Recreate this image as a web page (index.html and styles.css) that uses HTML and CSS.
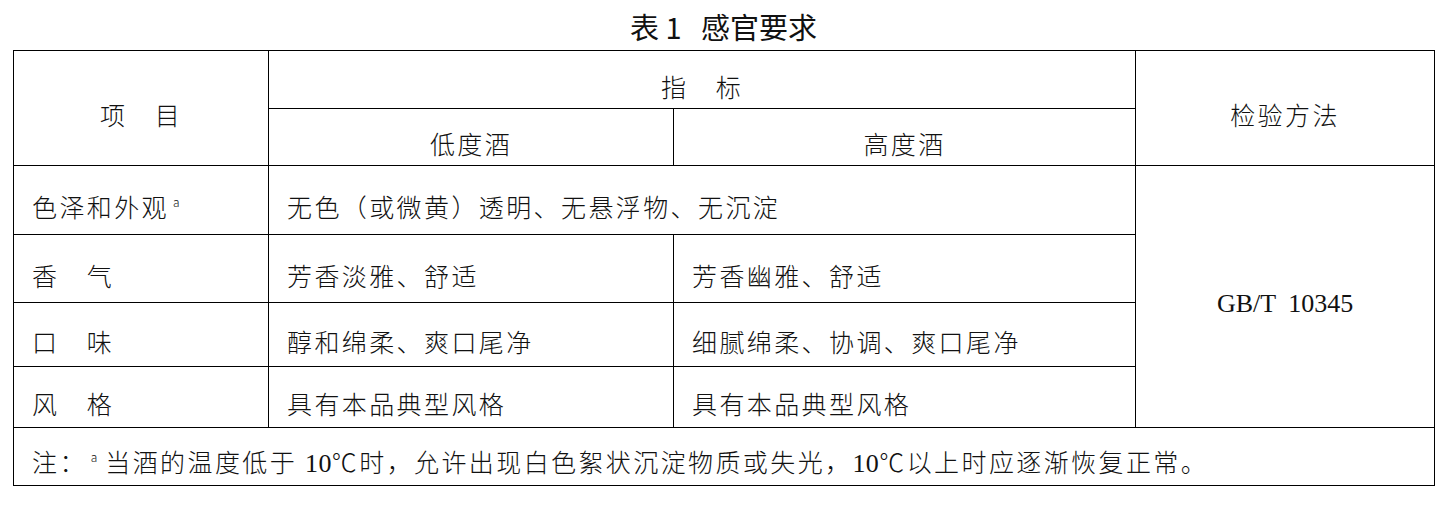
FILE: index.html
```html
<!DOCTYPE html>
<html lang="zh-CN">
<head>
<meta charset="utf-8">
<title>表1 感官要求</title>
<link rel="stylesheet" href="styles.css">
</head>
<body>
<div class="page">
  <h1 class="title">表&nbsp;1&nbsp;&nbsp;&nbsp;感官要求</h1>
  <table class="spec">
    <colgroup>
      <col class="c1"><col class="c2"><col class="c3"><col class="c4">
    </colgroup>
    <tr class="h1">
      <td rowspan="2" class="center">项　目</td>
      <td colspan="2" class="center">指　标</td>
      <td rowspan="2" class="center">检验方法</td>
    </tr>
    <tr class="h2">
      <td class="center">低度酒</td>
      <td class="center">高度酒</td>
    </tr>
    <tr class="r1">
      <td>色泽和外观<sup class="sup">a</sup></td>
      <td colspan="2">无色（或微黄）透明、无悬浮物、无沉淀</td>
      <td rowspan="4" class="center"><span class="num std">GB/T 10345</span></td>
    </tr>
    <tr class="r2">
      <td>香　气</td>
      <td>芳香淡雅、舒适</td>
      <td>芳香幽雅、舒适</td>
    </tr>
    <tr class="r3">
      <td>口　味</td>
      <td>醇和绵柔、爽口尾净</td>
      <td>细腻绵柔、协调、爽口尾净</td>
    </tr>
    <tr class="r4">
      <td>风　格</td>
      <td>具有本品典型风格</td>
      <td>具有本品典型风格</td>
    </tr>
    <tr class="note">
      <td colspan="4">注：<sup class="sup">a</sup> 当酒的温度低于 <span class="num">10</span>℃时，允许出现白色絮状沉淀物质或失光，<span class="num">10</span>℃以上时应逐渐恢复正常。</td>
    </tr>
  </table>
</div>
</body>
</html>
```

FILE: styles.css
```css
html, body {
  margin: 0;
  padding: 0;
  background: #fff;
}

.page {
  padding-left: 13px;
  width: 1421px;
  font-family: "Noto Sans CJK SC", "Noto Sans", sans-serif;
  color: #111;
}

.title {
  margin: 0;
  height: 50px;
  line-height: 52px;
  text-align: center;
  font-size: 29px;
  font-weight: 400;
  white-space: pre;
}

.spec {
  border-collapse: collapse;
  table-layout: fixed;
  width: 1421px;
  font-size: 25px;
  letter-spacing: 2.4px;
  font-weight: 300;
}

.c1 { width: 255px; }
.c2 { width: 405px; }
.c3 { width: 462px; }
.c4 { width: 299px; }

.spec td {
  border: 1px solid #000;
  padding: 12px 0 0 18px;
  vertical-align: middle;
  line-height: 36px;
  white-space: nowrap;
}

.spec td.center {
  text-align: center;
  padding-left: 0;
}

.h1 { height: 58px; }
.h2 { height: 57px; }
.r1 { height: 69px; }
.r2 { height: 68px; }
.r3 { height: 64px; }
.r4 { height: 61px; }
.note { height: 58px; }

.sup {
  font-size: 12px;
  vertical-align: 10px;
  line-height: 0;
  margin-left: 4px;
  letter-spacing: 0;
}

.num {
  font-family: "Liberation Serif", serif;
  font-size: 26px;
  letter-spacing: 0.4px;
  font-weight: 400;
}

.std {
  letter-spacing: 0;
  word-spacing: 6px;
}
```
